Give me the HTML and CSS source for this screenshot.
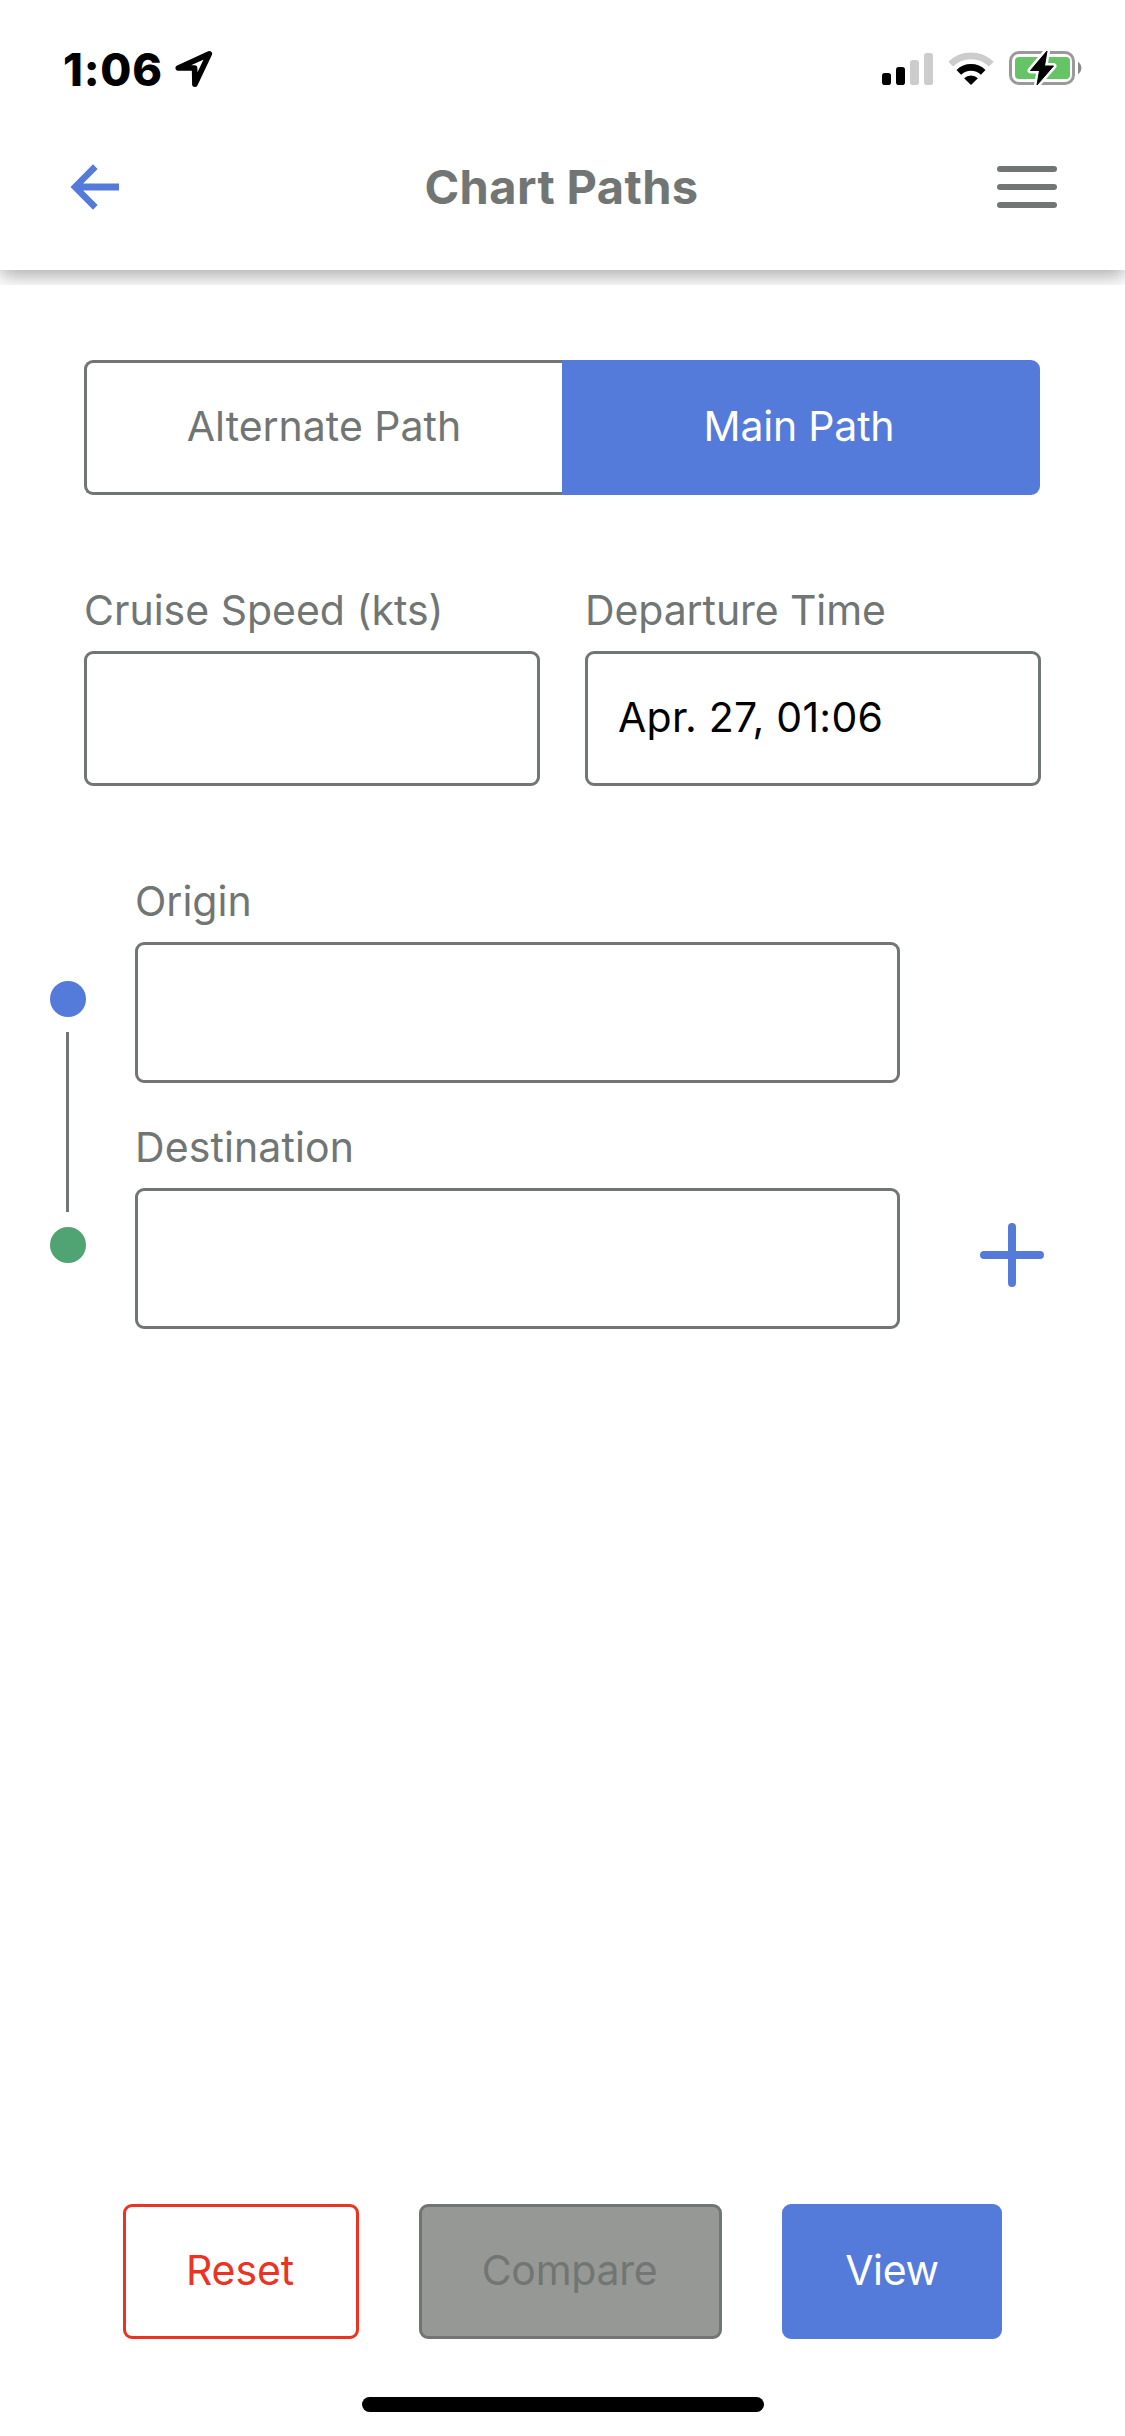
FILE: index.html
```html
<!DOCTYPE html>
<html lang="en">
<head>
<meta charset="utf-8">
<title>Chart Paths</title>
<link rel="stylesheet" href="styles.css">
</head>
<body>
<div class="screen">
  <div class="header-clip">
    <header class="header">
      <div class="status">
        <span class="clock">1:06</span>
        <svg class="location" width="40" height="40" viewBox="0 0 40 40"><path d="M36.300 4.900L5.300 19H21.600L21.900 35.300Z" fill="none" stroke="#000" stroke-width="5.600" stroke-linejoin="round"/></svg>
        <svg class="signal" width="52" height="34" viewBox="0 0 52 34"><rect x="0" y="21" width="9" height="12" rx="2.800"/><rect x="14" y="15" width="9" height="18" rx="2.800"/><rect x="28" y="8" width="9" height="25" rx="2.800" fill="#ccc"/><rect x="42" y="1" width="9" height="32" rx="2.800" fill="#ccc"/></svg>
        <svg class="wifi" width="46" height="34" viewBox="0 0 46 34"><path d="M2.700 12.200A29 29 0 0 1 43.300 12.200" fill="none" stroke="#ccc" stroke-width="6.600"/><path d="M10.800 20.300A17.500 17.500 0 0 1 35.200 20.300" fill="none" stroke="#000" stroke-width="6.600"/><path d="M23 33L16.100 26.200A10 10 0 0 1 29.900 26.200Z"/></svg>
        <svg class="battery" width="75" height="38" viewBox="0 0 75 38"><rect x="1.500" y="4.500" width="63" height="31" rx="8.500" fill="none" stroke="#999" stroke-width="3"/><rect x="6" y="9" width="55" height="22" rx="4" fill="#65c466"/><path d="M69 14A7 7 0 0 1 69 26Z" fill="#888"/><path d="M38 3L21.500 22.500H30.500L28 37L44.500 18H35.500Z" stroke="#fff" stroke-width="6" stroke-linejoin="round"/><path d="M38 3L21.500 22.500H30.500L28 37L44.500 18H35.500Z" stroke="#000" stroke-width="1" stroke-linejoin="round"/></svg>
      </div>
      <div class="nav">
        <svg width="50" height="48" viewBox="0 0 50 48"><path d="M.5 24L23 1.300L27.600 6L13.100 20.500H49V27.500H13.100L27.600 42L23 46.700Z" fill="#547ada"/></svg>
        <h1 class="title">Chart Paths</h1>
        <div class="menu"><i></i><i></i><i></i></div>
      </div>
    </header>
  </div>

  <main class="main">
    <div class="toggle">
      <button class="seg alt">Alternate Path</button>
      <button class="seg active">Main Path</button>
    </div>
    <div class="fields">
      <div class="field">
        <span class="label cruise">Cruise Speed (kts)</span>
        <div class="input"></div>
      </div>
      <div class="field">
        <span class="label departure">Departure Time</span>
        <div class="input"><span class="time">Apr. 27, 01:06</span></div>
      </div>
    </div>
    <div class="route">
      <div class="track"><b class="dot"></b><b class="line"></b><b class="dot end"></b></div>
      <div class="stops">
        <div class="field">
          <span class="label origin">Origin</span>
          <div class="input tall"></div>
        </div>
        <div class="field">
          <span class="label destination">Destination</span>
          <div class="input tall"></div>
        </div>
      </div>
      <svg class="add" width="64" height="64" viewBox="0 0 64 64"><path d="M4 32H60M32 4V60" stroke="#547ada" stroke-width="8" stroke-linecap="round"/></svg>
    </div>
  </main>

  <footer class="actions">
    <button class="btn reset">Reset</button>
    <button class="btn compare">Compare</button>
    <button class="btn view">View</button>
  </footer>
  <div class="home"></div>
</div>
</body>
</html>
```
FILE: styles.css
```css
* { box-sizing: border-box; }
body { margin: 0; background: #fff; font-family: Inter, "Liberation Sans", sans-serif; font-size: 41px; color: #717573; }
svg { display: block; flex: none; }
button { font: inherit; }
.screen { width: 1125px; height: 2436px; display: flex; flex-direction: column; background: #fff; overflow: hidden; }
.header-clip { height: 285px; overflow: hidden; flex: none; }
.header { height: 270px; background: #fff; box-shadow: 0 6px 18px rgba(0, 0, 0, .33); }
.status { height: 134px; padding: 49px 41px 0 63px; display: flex; align-items: flex-start; }
.clock { width: 110px; flex: none; color: #000; font-size: 45px; line-height: 41px; font-weight: 800; letter-spacing: .8px; white-space: nowrap; }
.location { margin-right: auto; }
.signal { margin: 3px 14px 0 0; }
.wifi { margin: 3px 15px 0 0; }
.battery { margin: -1px 0 0; }
.nav { height: 106px; padding: 0 68px 0 70px; display: flex; align-items: center; justify-content: space-between; }
.title { margin: 0; padding: 0 0 1px 6px; font-size: 47px; line-height: 56px; font-weight: 700; letter-spacing: .4px; white-space: nowrap; }
.menu { width: 60px; display: flex; flex-direction: column; gap: 12px; }
.menu i { height: 6px; border-radius: 3px; background: #717573; }
.main { flex: 1; padding: 75px 84px 0; }
.toggle { display: flex; width: 956px; height: 135px; }
.seg { width: 478px; padding: 0 1px 3px 0; border: 3px solid #717573; border-right: 0; border-radius: 9px 0 0 9px; background: #fff; color: #717573; }
.seg.active { padding-right: 4px; border: 0; border-radius: 0 9px 9px 0; background: #547ada; color: #fff; letter-spacing: -.2px; }
.fields { margin-top: 90px; width: 957px; display: flex; gap: 45px; }
.field { flex: 1; display: flex; flex-direction: column; gap: 16px; }
.label { line-height: 50px; white-space: nowrap; }
.departure { letter-spacing: -.1px; }
.destination { letter-spacing: .1px; }
.time { letter-spacing: .25px; }
.input { height: 135px; border: 3px solid #717573; border-radius: 9px; padding: 0 0 3px 30px; display: flex; align-items: center; color: #000; }
.input.tall { height: 141px; }
.route { margin: 90px 0 0 -34px; display: flex; align-items: flex-start; }
.track { width: 36px; flex: none; margin: 105px 49px 0 0; display: flex; flex-direction: column; align-items: center; gap: 15px; }
.dot { width: 36px; height: 36px; border-radius: 50%; background: #547ada; }
.dot.end { background: #50a372; }
.line { width: 3px; height: 180px; margin-right: 1px; background: #717573; }
.stops { width: 765px; flex: none; display: flex; flex-direction: column; gap: 39px; }
.add { margin: 347px 0 0 80px; }
.actions { display: flex; gap: 60px; padding-left: 123px; }
.btn { height: 135px; padding: 0 2px 3px 0; border: 3px solid; border-radius: 9px; background: #fff; letter-spacing: -.3px; }
.reset { width: 236px; color: #ec3323; letter-spacing: -.1px; }
.compare { width: 303px; color: #717573; background: #969896; }
.view { width: 220px; padding-right: 0; color: #fff; background: #547ada; border-color: #547ada; }
.home { width: 402px; height: 15px; margin: 58px auto 24px; border-radius: 8px; background: #000; flex: none; }
```
